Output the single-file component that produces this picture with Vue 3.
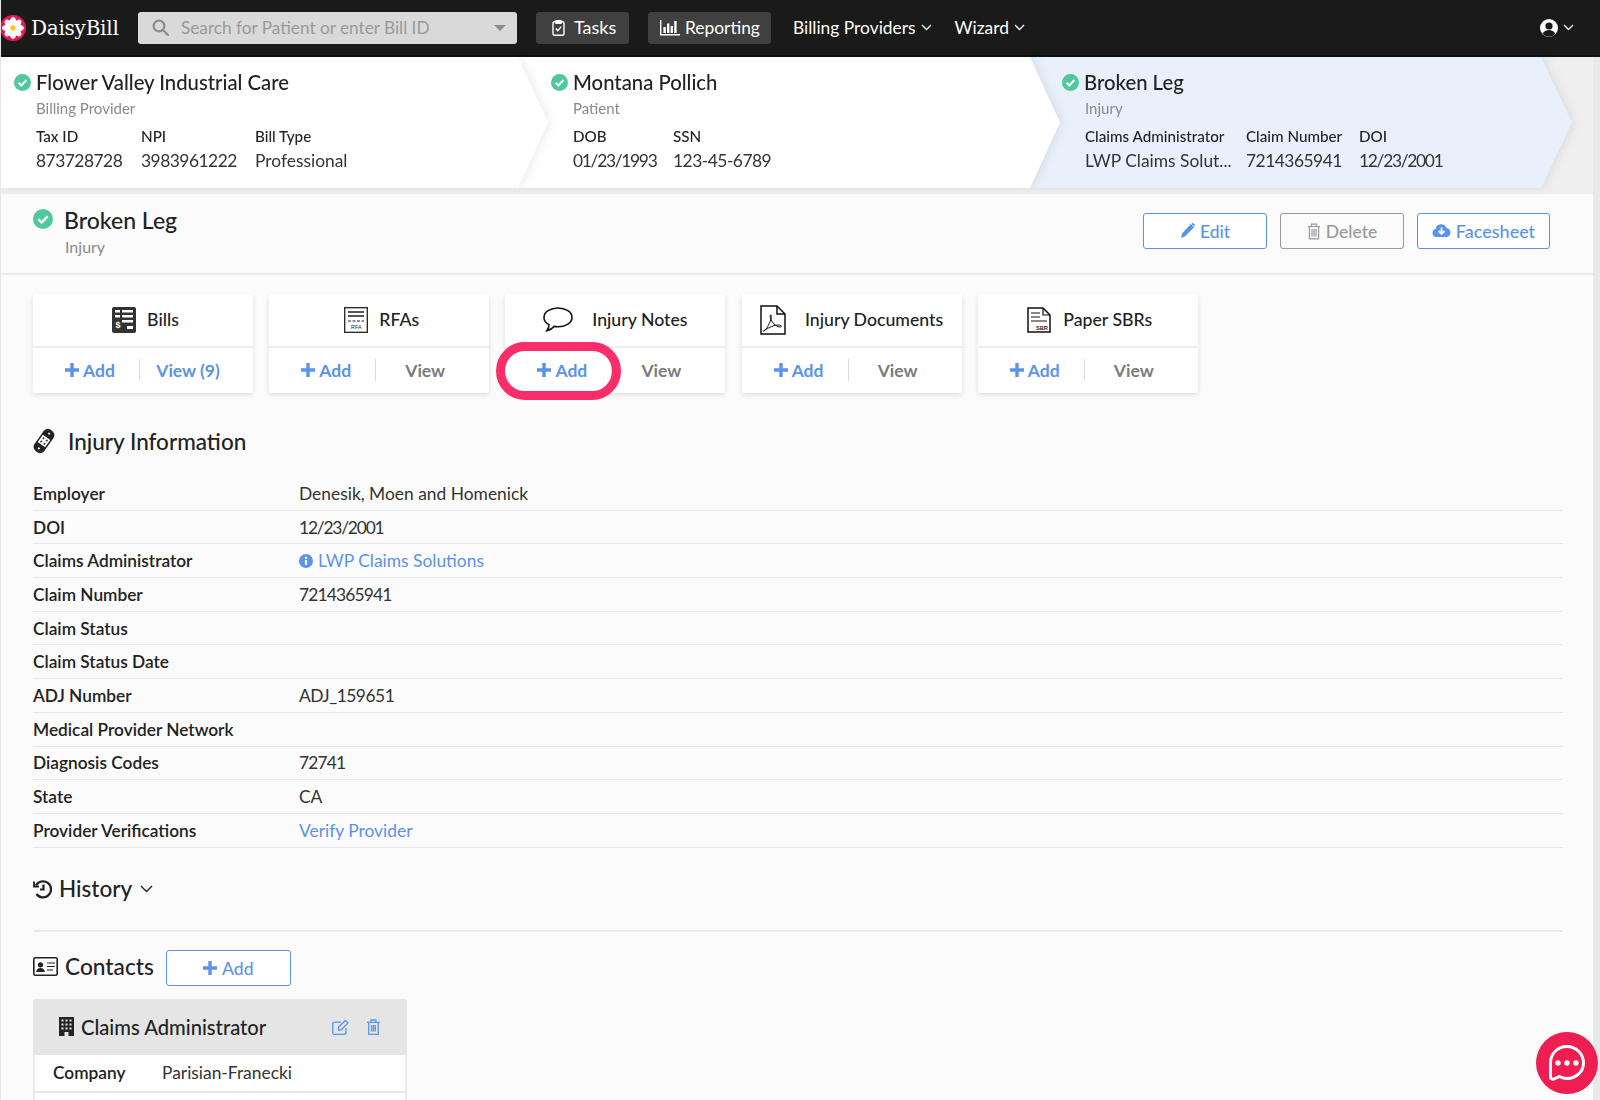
<script setup>
const crumbs = [
  { cls: 'c1', title: 'Flower Valley Industrial Care', sub: 'Billing Provider', cols: [
    { k: 'Tax ID', v: '873728728', w: 105, n: 'num' }, { k: 'NPI', v: '3983961222', w: 114, n: 'num' }, { k: 'Bill Type', v: 'Professional', w: 120 } ] },
  { cls: 'c2', title: 'Montana Pollich', sub: 'Patient', cols: [
    { k: 'DOB', v: '01/23/1993', w: 100, n: 'date' }, { k: 'SSN', v: '123-45-6789', w: 120, n: 'num' } ] },
  { cls: 'c3', title: 'Broken Leg', sub: 'Injury', cols: [
    { k: 'Claims Administrator', v: 'LWP Claims Solut...', w: 161 }, { k: 'Claim Number', v: '7214365941', w: 113, n: 'num' }, { k: 'DOI', v: '12/23/2001', w: 110, n: 'date' } ] },
]
const cards = [
  { t: 'Bills', icon: 'bills', view: 'View (9)', link: true },
  { t: 'RFAs', icon: 'rfa', view: 'View' },
  { t: 'Injury Notes', icon: 'note', view: 'View' },
  { t: 'Injury Documents', icon: 'pdf', view: 'View' },
  { t: 'Paper SBRs', icon: 'sbr', view: 'View' },
]
const rows = [
  { k: 'Employer', v: 'Denesik, Moen and Homenick' },
  { k: 'DOI', v: '12/23/2001', n: 'date' },
  { k: 'Claims Administrator', v: 'LWP Claims Solutions', kind: 'info' },
  { k: 'Claim Number', v: '7214365941', n: 'num' },
  { k: 'Claim Status', v: '' },
  { k: 'Claim Status Date', v: '' },
  { k: 'ADJ Number', v: 'ADJ_159651', n: 'adj' },
  { k: 'Medical Provider Network', v: '' },
  { k: 'Diagnosis Codes', v: '72741', n: 'num' },
  { k: 'State', v: 'CA' },
  { k: 'Provider Verifications', v: 'Verify Provider', kind: 'link' },
]
const petals = [0, 45, 90, 135, 180, 225, 270, 315]
</script>

<template>
  <div class="page">
    <header class="nav">
      <div class="brand">
        <svg class="daisy" viewBox="0 0 26 26" width="26" height="26">
          <circle cx="13" cy="13" r="13" fill="#e8194f" />
          <ellipse v-for="p in petals" :key="p" cx="13" cy="7" rx="3.2" ry="5" fill="#fff" :transform="`rotate(${p} 13 13)`" />
          <circle cx="13" cy="13" r="2.6" fill="#f5c518" />
        </svg>
        <span class="logotext">DaisyBill</span>
      </div>
      <div class="search">
        <svg width="17" height="17" viewBox="0 0 17 17" fill="none" stroke="#8c8c8c" stroke-width="2.2"><circle cx="7" cy="7" r="5.4" /><path d="M11 11l5 5" stroke-linecap="round" /></svg>
        <span class="ph">Search for Patient or enter Bill ID</span>
        <i class="caret"></i>
      </div>
      <div class="navbtn tasks">
        <svg width="13" height="17" viewBox="0 0 13 17" fill="none" stroke="#fff" stroke-width="1.4"><rect x="1" y="2.8" width="11" height="13.4" rx="1.5" /><path d="M4 1.6h5v2.6H4z" fill="#fff" /><path d="M3.8 9.6l2 2 3.4-4" /></svg>
        <span>Tasks</span>
      </div>
      <div class="navbtn reporting">
        <svg width="20" height="17" viewBox="0 0 20 17" fill="#fff"><path d="M0 1h1.4v14H20v1.4H0z" /><rect x="3.4" y="8" width="2.4" height="6" /><rect x="7" y="4.5" width="2.4" height="9.5" /><rect x="10.6" y="7" width="2.4" height="7" /><rect x="14.2" y="2" width="2.4" height="12" /></svg>
        <span>Reporting</span>
      </div>
      <div class="navlink first">Billing Providers<svg class="chev" width="11" height="7" viewBox="0 0 11 7" fill="none" stroke="#fff" stroke-width="1.3"><path d="M1 1l4.5 4.5L10 1" /></svg></div>
      <div class="navlink">Wizard<svg class="chev" width="11" height="7" viewBox="0 0 11 7" fill="none" stroke="#fff" stroke-width="1.3"><path d="M1 1l4.5 4.5L10 1" /></svg></div>
      <div class="usermenu">
        <svg width="18" height="18" viewBox="0 0 18 18"><circle cx="9" cy="9" r="9" fill="#fff" /><circle cx="9" cy="7" r="3.6" fill="#1a1a1a" /><path d="M2.6 15c1.4-3 3.6-4 6.4-4s5 1 6.4 4a9 9 0 0 1-12.8 0z" fill="#1a1a1a" /></svg>
        <svg class="chev" width="11" height="7" viewBox="0 0 11 7" fill="none" stroke="#fff" stroke-width="1.3"><path d="M1 1l4.5 4.5L10 1" /></svg>
      </div>
    </header>

    <section class="crumbs">
      <div v-for="c in crumbs" :key="c.title" class="crumb" :class="c.cls">
        <div class="shape">
          <div class="crumb-title">
            <svg class="check small" viewBox="0 0 18 18"><circle cx="9" cy="9" r="9" fill="#4fc89e" /><path d="M4.8 9.2l3 3 5.4-5.8" fill="none" stroke="#fff" stroke-width="2.2" /></svg>
            <span>{{ c.title }}</span>
          </div>
          <div class="crumb-sub">{{ c.sub }}</div>
          <div class="kv">
            <div v-for="col in c.cols" :key="col.k" class="kv-col" :style="{ width: col.w + 'px' }">
              <div class="kv-k">{{ col.k }}</div>
              <div class="kv-v" :class="col.n">{{ col.v }}</div>
            </div>
          </div>
        </div>
      </div>
    </section>

    <section class="head">
      <svg class="check big" viewBox="0 0 18 18"><circle cx="9" cy="9" r="9" fill="#4fc89e" /><path d="M4.8 9.2l3 3 5.4-5.8" fill="none" stroke="#fff" stroke-width="2.2" /></svg>
      <div class="head-text">
        <div class="head-title">Broken Leg</div>
        <div class="head-sub">Injury</div>
      </div>
      <div class="head-actions">
        <div class="btn w-edit">
          <svg width="15" height="16" viewBox="0 0 15 16" fill="currentColor"><path d="M10.8 1l3.2 3.2-8.8 9L1 15l1-4.4zM12 .2a1 1 0 0 1 1.3 0l1.4 1.4a1 1 0 0 1 0 1.3l-.6.6-2.7-2.7z" /></svg>
          <span>Edit</span>
        </div>
        <div class="btn grey w-del">
          <svg width="14" height="17" viewBox="0 0 14 17" fill="none" stroke="currentColor" stroke-width="1.2"><path d="M1 3.5h12M4.5 3.5V1.2h5v2.3M2.4 3.5v12.3h9.2V3.5M5 6v7.5M7 6v7.5M9 6v7.5" /></svg>
          <span>Delete</span>
        </div>
        <div class="btn w-face">
          <svg width="19" height="16" viewBox="0 0 19 16"><path d="M4.5 14A4 4 0 0 1 3.6 6.1 5.6 5.6 0 0 1 14.4 5 4.6 4.6 0 0 1 15 14z" fill="currentColor" /><path d="M9.5 4.5v6M6.6 8l2.9 3 2.9-3" fill="none" stroke="#fbfbfb" stroke-width="1.8" /></svg>
          <span>Facesheet</span>
        </div>
      </div>
    </section>

    <main class="main">
      <div class="cards">
        <div v-for="(c, i) in cards" :key="c.t" class="card">
          <div class="card-head" :class="c.icon">
            <svg v-if="c.icon === 'bills'" width="24" height="26" viewBox="0 0 24 26"><rect width="24" height="26" rx="2" fill="#333" /><path d="M3 3h5v2.5H3zM10 3h11v2.5H10zM3 8h5v2.5H3zM10 8h11v2.5H10zM10 13h11v2.5H10zM15 19h6v3h-6z" fill="#fff" /><text x="3.5" y="21" font-size="9" font-weight="700" fill="#fff" font-family="Liberation Sans, sans-serif">$</text></svg>
            <svg v-if="c.icon === 'rfa'" width="24" height="26" viewBox="0 0 24 26" fill="none" stroke="#222"><rect x=".7" y=".7" width="22.6" height="24.6" stroke-width="1.3" /><path d="M4 5h16M4 9h16" stroke-width="1.4" /><path d="M4 14h16" stroke-dasharray="3 1.5" /><text x="7" y="22" font-size="5.4" fill="#222" stroke="none" font-family="Liberation Sans, sans-serif">RFA</text></svg>
            <svg v-if="c.icon === 'note'" width="30" height="25" viewBox="0 0 30 25" fill="none" stroke="#111" stroke-width="1.6"><path d="M15 1C7.3 1 1 5 1 10.4c0 3 2 5.6 5 7.2 0 2.2-.7 4.3-2 6 3-.6 5.5-2.2 7-4.2 1.3.3 2.6.4 4 .4 7.7 0 14-4 14-9.4S22.7 1 15 1z" /></svg>
            <svg v-if="c.icon === 'pdf'" width="26" height="30" viewBox="0 0 26 30" fill="none" stroke="#111" stroke-width="1.5"><path d="M1 1h16l8 8v20H1z" /><path d="M17 1v8h8" /><path d="M4 26c2-1 5-6 7-12 .6-2 .2-5-.6-4-.7 1 0 4 2 7 2 3 5 5 8 5 2 0 1-2-2-2-4 0-9 2-15 6z" stroke-width="1" /></svg>
            <svg v-if="c.icon === 'sbr'" width="24" height="26" viewBox="0 0 24 26" fill="none" stroke="#111"><path d="M1 1h15l7 7v17H1z" stroke-width="1.5" /><path d="M16 1v7h7" stroke-width="1.2" /><path d="M4 6h9M4 10h9M4 14h16" /><text x="9" y="22.5" font-size="5.6" font-weight="700" fill="#222" stroke="none" font-family="Liberation Sans, sans-serif">SBR</text></svg>
            <span>{{ c.t }}</span>
          </div>
          <div class="card-actions">
            <div class="act add"><svg width="14" height="14" viewBox="0 0 14 14" fill="currentColor"><path d="M5.3 0h3.4v5.3H14v3.4H8.7V14H5.3V8.7H0V5.3h5.3z" /></svg><span>Add</span></div>
            <div class="act view" :class="{ link: c.link }"><span>{{ c.view }}</span></div>
          </div>
          <div v-if="i === 2" class="highlight"></div>
        </div>
      </div>

      <h2 class="sec info-h">
        <svg width="22" height="26" viewBox="0 0 22 26"><g transform="rotate(35 11 13)"><rect x="5" y="0" width="12" height="26" rx="5" fill="#222" /><rect x="6.5" y="8.5" width="9" height="9" fill="#fff" /><circle cx="9" cy="11" r="1" fill="#222" /><circle cx="13" cy="15" r="1" fill="#222" /><circle cx="13" cy="11" r="1" fill="#222" /><circle cx="9" cy="15" r="1" fill="#222" /><circle cx="11" cy="4" r="1" fill="#fff" /><circle cx="11" cy="22" r="1" fill="#fff" /></g></svg>
        <span>Injury Information</span>
      </h2>

      <div class="rows">
        <div v-for="r in rows" :key="r.k" class="row">
          <div class="row-k">{{ r.k }}</div>
          <div class="row-v" :class="[r.n, { blue: r.kind }]">
            <svg v-if="r.kind === 'info'" class="info-i" width="14" height="14" viewBox="0 0 14 14"><circle cx="7" cy="7" r="7" fill="#5b93e8" /><rect x="5.9" y="6" width="2.2" height="5" fill="#fff" /><rect x="5.9" y="2.8" width="2.2" height="2.1" fill="#fff" /></svg>
            {{ r.v }}
          </div>
        </div>
      </div>

      <h2 class="sec history">
        <svg width="20" height="20" viewBox="0 0 20 20" fill="none" stroke="#222" stroke-width="2.2"><path d="M3 6.5A8 8 0 1 1 3.5 15" /><path d="M1 2.5v5h5" fill="none" stroke-width="1.8" /><path d="M10.5 5.5v5H7" /></svg>
        <span>History</span>
        <svg class="hchev" width="13" height="8" viewBox="0 0 13 8" fill="none" stroke="#222" stroke-width="1.4"><path d="M1 1l5.5 5.5L12 1" /></svg>
      </h2>
      <div class="rule"></div>

      <div class="contacts-h">
        <svg width="25" height="19" viewBox="0 0 25 19"><rect x=".8" y=".8" width="23.4" height="17.4" rx="1.5" fill="#fff" stroke="#222" stroke-width="1.6" /><circle cx="7.5" cy="7.8" r="2.6" fill="#222" /><path d="M3.2 15c.3-3 2-4 4.3-4s4 1 4.3 4z" fill="#222" /><path d="M14 6h8M14 9.5h8M14 13h6" stroke="#222" stroke-width="1.2" /></svg>
        <span class="contacts-t">Contacts</span>
        <div class="btn w-add">
          <svg width="14" height="14" viewBox="0 0 14 14" fill="currentColor"><path d="M5.3 0h3.4v5.3H14v3.4H8.7V14H5.3V8.7H0V5.3h5.3z" /></svg>
          <span>Add</span>
        </div>
      </div>

      <div class="contact">
        <div class="contact-head">
          <svg width="15" height="19" viewBox="0 0 15 19"><rect width="15" height="19" fill="#222" /><path d="M2.5 2.5h2v2h-2zM6.5 2.5h2v2h-2zM10.5 2.5h2v2h-2zM2.5 6.5h2v2h-2zM6.5 6.5h2v2h-2zM10.5 6.5h2v2h-2zM2.5 10.5h2v2h-2zM6.5 10.5h2v2h-2zM10.5 10.5h2v2h-2zM5.5 15h4v4h-4z" fill="#e5e5e5" /></svg>
          <span class="contact-t">Claims Administrator</span>
          <svg class="ci1" width="18" height="16" viewBox="0 0 18 16" fill="none" stroke="#5b93e8" stroke-width="1.3"><path d="M14 9v4.5a1.8 1.8 0 0 1-1.8 1.8H2.5A1.8 1.8 0 0 1 .7 13.5V5a1.8 1.8 0 0 1 1.8-1.8H9" /><path d="M6.5 8l7-6.500 2.500 2.500-7 7H6.500z" /></svg>
          <svg class="ci2" width="13" height="16" viewBox="0 0 13 16" fill="none" stroke="#5b93e8" stroke-width="1.3"><path d="M0 3.3h13M4 3.3V1h5v2.3M1.8 3.3v12h9.4v-12M4.7 6v6.5M6.5 6v6.5M8.3 6v6.5" /></svg>
        </div>
        <div class="contact-row"><span class="contact-k">Company</span><span class="contact-v">Parisian-Franecki</span></div>
        <div class="contact-row"></div>
      </div>
    </main>

    <div class="scrollbar"></div>
    <div class="chat">
      <svg width="40" height="40" viewBox="0 0 40 40" fill="none"><path d="M20 3.5C10.6 3.5 3.5 10.6 3.5 20v13.4c0 2.2 1.8 3.4 3.8 2.5l5-2.4c2.3 1.2 4.8 2 7.7 2 9.4 0 16.500-7 16.500-15.500S29.400 3.500 20 3.500z" stroke="#fff" stroke-width="3" /><circle cx="11" cy="20" r="2.7" fill="#fff" /><circle cx="20" cy="20" r="2.7" fill="#fff" /><circle cx="29" cy="20" r="2.7" fill="#fff" /></svg>
    </div>
  </div>
</template>

<style>
html, body { margin: 0; height: 1100px; overflow: hidden; background: #fbfbfb; }
</style>

<style scoped>
.page { position: relative; width: 1600px; height: 1100px; overflow: hidden; background: #fbfbfb; border-left: 1px solid #e6e6e6; box-sizing: border-box; font-family: Lato, "Liberation Sans", sans-serif; color: #222; }

.nav { height: 55px; margin-left: -1px; background: #1a1a1a; border-bottom: 2px solid #111; display: flex; align-items: center; box-sizing: content-box; color: #fff; font-size: 17.4px; }
.brand { display: flex; align-items: center; width: 138px; flex: none; }
.daisy { flex: none; }
.logotext { font-family: "DejaVu Serif", serif; font-size: 20px; margin-left: 5px; letter-spacing: -.25px; }
.search { width: 379px; height: 32px; background: #d9d9d9; border-radius: 3px; display: flex; align-items: center; padding-left: 14px; box-sizing: border-box; flex: none; }
.ph { color: #999; margin-left: 12px; font-size: 17.2px; }
.caret { margin-left: auto; margin-right: 11px; border-left: 6px solid transparent; border-right: 6px solid transparent; border-top: 6px solid #8c8c8c; }
.navbtn { height: 32px; background: #404040; border-radius: 3px; display: flex; align-items: center; box-sizing: border-box; flex: none; }
.tasks { width: 93px; margin-left: 19px; padding-left: 16px; gap: 9px; font-size: 18px; }
.tasks span { margin-top: -2px; }
.reporting { width: 123px; margin-left: 19px; padding-left: 12px; gap: 5px; }
.navlink { display: flex; align-items: center; margin-left: 22px; flex: none; }
.navlink.first { margin-left: 22px; }
.navlink + .navlink { margin-left: 23px; }
.chev { margin-left: 5px; }
.usermenu { margin-left: auto; margin-right: 26px; display: flex; align-items: center; }

.crumbs { height: 137px; background: #efefef; display: flex; margin-left: -1px; }
.crumb { height: 131px; position: relative; flex: none; filter: drop-shadow(3px 0 5px rgba(0,0,0,.07)); }
.shape { height: 100%; box-sizing: border-box; background: #fff; padding-top: 12px; }
.c1 { width: 548px; z-index: 3; }
.c2 { width: 542px; margin-left: -30px; z-index: 2; }
.c3 { width: 542px; margin-left: -30px; z-index: 1; }
.c1 .shape { clip-path: polygon(0 0, 518px 0, 548px 50%, 518px 100%, 0 100%); padding-left: 14px; }
.c2 .shape { clip-path: polygon(0 0, 512px 0, 542px 50%, 512px 100%, 0 100%); padding-left: 33px; }
.c3 .shape { clip-path: polygon(0 0, 511px 0, 542px 50%, 511px 100%, 0 100%); background: #e8f0fb; padding-left: 32px; }
.crumb-title { display: flex; align-items: center; font-size: 20.3px; line-height: 26px; font-weight: 500; }
.check.small { width: 17px; height: 17px; margin-right: 5px; flex: none; }
.crumb-sub { margin-left: 22px; margin-top: 4px; font-size: 15px; line-height: 18px; color: #8a8a8a; }
.kv { display: flex; margin-left: 22px; margin-top: 10px; }
.c3 .kv, .c3 .crumb-sub { margin-left: 23px; }
.kv-col { flex: none; white-space: nowrap; }
.kv-k { font-size: 15.2px; line-height: 18px; font-weight: 500; }
.kv-v { font-size: 17.4px; line-height: 22px; margin-top: 5px; color: #333; }
.kv-v.num { letter-spacing: -.5px; }
.kv-v.date { letter-spacing: -1.3px; }

.head { height: 79px; display: flex; border-bottom: 2px solid #eaeaea; padding-left: 32px; box-sizing: content-box; position: relative; }
.check.big { width: 20px; height: 20px; margin-top: 15px; flex: none; }
.head-text { margin-left: 11px; padding-top: 12px; }
.head-title { font-size: 23px; line-height: 28px; font-weight: 500; }
.head-sub { font-size: 16px; line-height: 20px; margin-top: 3px; padding-left: 1px; color: #8a8a8a; }
.head-actions { margin-left: auto; margin-right: 50px; display: flex; gap: 13px; padding-top: 19px; }
.btn { height: 36px; box-sizing: border-box; border: 1.5px solid #5b93e8; border-radius: 3px; color: #5b93e8; display: flex; align-items: center; justify-content: center; gap: 5px; font-size: 17.5px; font-weight: 500; background: #fff; flex: none; }
.btn.grey { border-color: #9a9a9a; color: #999; background: #fbfbfb; }
.w-edit { width: 124px; }
.w-del { width: 124px; }
.w-face { width: 133px; font-size: 18px; }
.w-add { width: 125px; margin-left: 12px; margin-top: 3px; }

.main { padding: 19px 36px 0 32px; }
.cards { display: flex; gap: 16.2px; }
.card { width: 220px; height: 99px; background: #fff; border-radius: 2px; box-shadow: 0 2px 5px rgba(0,0,0,.12); position: relative; flex: none; }
.card-head { height: 51px; padding-bottom: 1px; border-bottom: 2px solid #eee; display: flex; align-items: center; justify-content: center; gap: 11px; font-size: 17.7px; font-weight: 500; box-sizing: content-box; margin-bottom: 1px; }
.card-head.bills, .card-head.rfa { padding-left: 5px; }
.card-head.note, .card-head.pdf { gap: 19px; }
.card-head.sbr { gap: 12px; padding-left: 4px; }
.card-actions { height: 44px; margin-top: -1px; display: flex; align-items: center; font-size: 17.5px; font-weight: 700; }
.act { display: flex; align-items: center; justify-content: center; gap: 4px; height: 22px; box-sizing: border-box; }
.add { flex: 0 0 107px; padding-left: 8px; color: #5b93e8; border-right: 1.5px solid #ddd; }
.view { flex: 1; padding-right: 15px; color: #7b7b7b; }
.view.link { color: #5b93e8; padding-right: 17px; }
.highlight { position: absolute; left: -9px; top: 48px; width: 125px; height: 58px; box-sizing: border-box; border: 9px solid #f92d6a; border-radius: 30px; }

.sec { margin: 0; font-weight: 500; font-size: 22.5px; display: flex; align-items: center; }
.info-h { margin-top: 31px; height: 34px; gap: 13px; }
.rows { margin-top: 19px; margin-right: 1px; }
.row { height: 33.7px; box-sizing: border-box; border-bottom: 1.5px solid #e6e6e6; display: flex; align-items: center; font-size: 17.4px; }
.row-k { width: 266px; flex: none; font-weight: 600; font-size: 17.3px; }
.row-v { color: #333; display: flex; align-items: center; gap: 5px; }
.row-v.blue { color: #5b93e8; }
.row-v.num { letter-spacing: -.85px; }
.row-v.date { letter-spacing: -1.2px; }
.row-v.adj { letter-spacing: -.5px; }
.info-i { flex: none; }
.history { margin-top: 24px; height: 34px; gap: 6px; }
.hchev { margin-left: 2px; }
.rule { height: 2px; background: #eaeaea; margin-top: 24px; margin-right: 1px; }
.contacts-h { display: flex; align-items: center; height: 36px; margin-top: 17px; }
.contacts-t { font-size: 22.7px; font-weight: 500; margin-left: 7px; }
.contact { width: 374px; margin-top: 14px; border: 2px solid #e8e8e8; border-top: 0; box-sizing: border-box; background: #fff; }
.contact-head { height: 56px; margin: 0 -2px; background: #e5e5e5; display: flex; align-items: center; padding-left: 26px; border-radius: 2px 2px 0 0; }
.contact-t { font-size: 20.2px; font-weight: 500; margin-left: 7px; }
.ci1 { margin-left: auto; }
.ci2 { margin-left: 17px; margin-right: 27px; }
.contact-row { height: 36px; display: flex; align-items: center; border-bottom: 2px solid #e8e8e8; padding-left: 18px; font-size: 17.4px; }
.contact-k { width: 109px; font-weight: 600; font-size: 17.3px; }
.contact-v { color: #333; }

.scrollbar { position: absolute; top: 57px; right: 0; bottom: 0; width: 7px; background: #e9e9e9; border-radius: 4px 0 0 0; }
.chat { position: absolute; left: 1535px; top: 1032px; width: 62px; height: 62px; border-radius: 50%; background: #ee1d52; display: flex; align-items: center; justify-content: center; }
</style>
